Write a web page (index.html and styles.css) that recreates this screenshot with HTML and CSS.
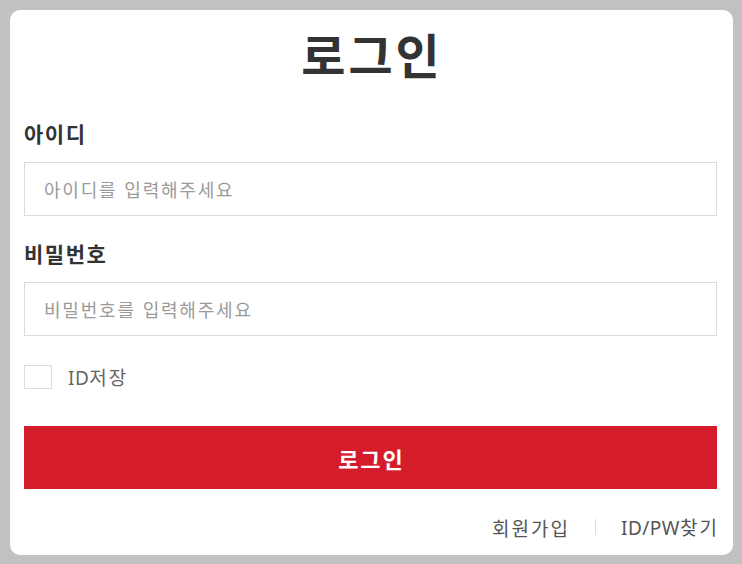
FILE: index.html
```html
<!DOCTYPE html>
<html lang="ko">
<head>
<meta charset="utf-8">
<link rel="stylesheet" href="styles.css">
</head>
<body>
<div class="card">
  <h1 class="title">로그인</h1>
  <label class="label">아이디</label>
  <div class="input"><span class="ph">아이디를 입력해주세요</span></div>
  <label class="label label2">비밀번호</label>
  <div class="input"><span class="ph">비밀번호를 입력해주세요</span></div>
  <div class="check-row">
    <span class="box"></span>
    <span class="check-label"><span class="latin">ID</span>저장</span>
  </div>
  <button class="btn">로그인</button>
  <div class="links">
    <span class="link">회원가입</span>
    <span class="sep"></span>
    <span class="link link-last"><span class="latin">ID/PW</span>찾기</span>
  </div>
</div>
</body>
</html>
```
FILE: styles.css
```css
html, body {
  margin: 0;
  padding: 0;
  background: #c1c1c1;
  font-family: "Noto Sans CJK KR", "Noto Sans", sans-serif;
}
body {
  padding: 10px 9px 9px 10px;
  height: 564px;
  box-sizing: border-box;
}
.card {
  background: #fff;
  border-radius: 10px;
  width: 723px;
  height: 545px;
  box-sizing: border-box;
  padding: 11px 16px 0 14px;
  display: flex;
  flex-direction: column;
}
.title {
  margin: 0 0 33px;
  font-size: 48px;
  line-height: 64px;
  font-weight: 700;
  color: #333;
  text-align: center;
  letter-spacing: 3px;
  text-indent: 3px;
}
.label {
  display: block;
  font-size: 21px;
  line-height: 30px;
  font-weight: 700;
  color: #333;
  margin-bottom: 14px;
  letter-spacing: 1.5px;
}
.label2 {
  margin-top: 22px;
}
.input {
  height: 54px;
  box-sizing: border-box;
  border: 1px solid #dcdcdc;
  padding: 0 19px;
  display: flex;
  align-items: center;
}
.ph {
  font-size: 18px;
  color: #9a9a9a;
  letter-spacing: 1.8px;
}
.check-row {
  margin-top: 29px;
  display: flex;
  align-items: center;
  height: 24px;
}
.box {
  width: 28px;
  height: 24px;
  box-sizing: border-box;
  border: 1px solid #dcdcdc;
  background: #fff;
}
.check-label {
  margin-left: 16px;
  font-size: 19px;
  color: #666;
  letter-spacing: 2px;
}
.latin {
  font-family: "Noto Sans", sans-serif;
  letter-spacing: 0.5px;
}
.btn {
  margin-top: 37px;
  height: 63px;
  border: 0;
  background: #d41c2a;
  color: #fff;
  font-family: inherit;
  font-size: 22px;
  font-weight: 700;
  letter-spacing: 2px;
  text-indent: 2px;
  padding: 0;
}
.links {
  margin-top: 23px;
  display: flex;
  justify-content: flex-end;
  align-items: center;
  height: 30px;
  gap: 25px;
}
.link {
  font-size: 19px;
  color: #555;
  letter-spacing: 2px;
}
.link-last {
  margin-right: -2px;
}
.sep {
  width: 1px;
  height: 16px;
  background: #ddd;
}
```
